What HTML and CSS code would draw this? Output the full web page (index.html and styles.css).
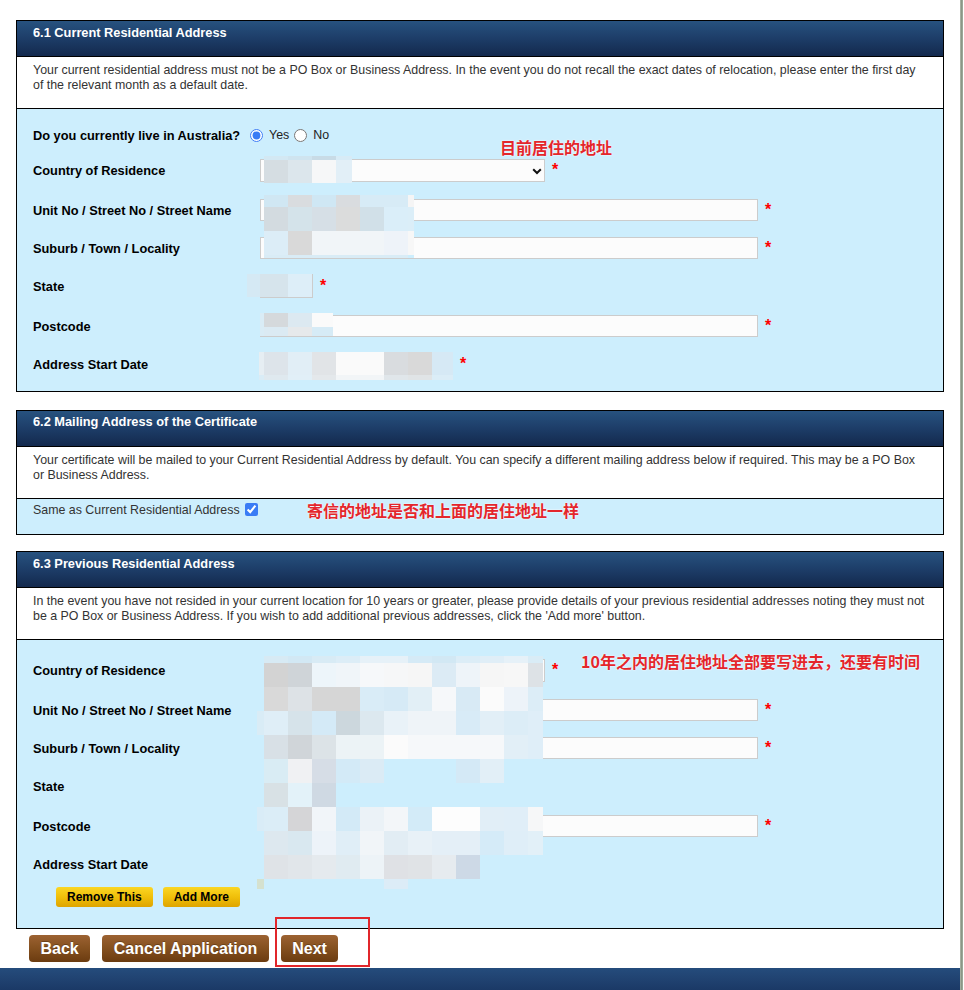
FILE: index.html
```html
<!DOCTYPE html>
<html lang="en">
<head>
<meta charset="utf-8">
<title>Residential Address</title>
<link rel="stylesheet" href="styles.css">
</head>
<body>
<div class="page">
  <div class="main">
    <div class="content">

      <section class="panel">
        <h2 class="panel-head">6.1 Current Residential Address</h2>
        <p class="panel-desc">Your current residential address must not be a PO Box or Business Address. In the event you do not recall the exact dates of relocation, please enter the first day<br>of the relevant month as a default date.</p>
        <div class="panel-body body-current">
          <div class="row row-short">
            <span class="label">Do you currently live in Australia?</span>
            <div class="field radios">
              <input type="radio" name="au" checked><span>Yes</span><input type="radio" name="au"><span>No</span>
            </div>
          </div>
          <div class="row">
            <span class="label">Country of Residence</span>
            <div class="field">
              <span class="select-wrap"><select class="select w-country"></select><svg class="chev" width="10" height="7" viewBox="0 0 10 7"><path d="M1.2 1.2 L5 5 L8.8 1.2" fill="none" stroke="#111" stroke-width="2"/></svg></span>
              <span class="req">*</span>
            </div>
          </div>
          <div class="row row-tall">
            <span class="label">Unit No / Street No / Street Name</span>
            <div class="field"><input class="text" type="text"><span class="req">*</span></div>
          </div>
          <div class="row row-tight">
            <span class="label">Suburb / Town / Locality</span>
            <div class="field"><input class="text" type="text"><span class="req">*</span></div>
          </div>
          <div class="row row-tall">
            <span class="label">State</span>
            <div class="field"><select class="select w-state"></select><span class="req">*</span></div>
          </div>
          <div class="row">
            <span class="label">Postcode</span>
            <div class="field"><input class="text" type="text"><span class="req">*</span></div>
          </div>
          <div class="row">
            <span class="label">Address Start Date</span>
            <div class="field">
              <div class="date-group"><select class="select w-day"></select><select class="select w-day"></select><select class="select w-year"></select></div>
              <span class="req">*</span>
            </div>
          </div>

          <div class="mosaic mz-country"><div class="mc1"></div><div class="mc2"></div></div>
          <div class="mosaic mz-street"><div class="ms1"></div><div class="ms2"></div><div class="ms3"></div><div class="ms4"></div></div>
          <div class="mosaic mz-state"><div class="mst"></div></div>
          <div class="mosaic mz-post"><div class="mp1"></div><div class="mp2"></div></div>
          <div class="mosaic mz-date"><div class="md1"></div><div class="md2"></div></div>

          <span class="note note-current">目前居住的地址</span>
        </div>
      </section>

      <section class="panel panel-mid">
        <h2 class="panel-head">6.2 Mailing Address of the Certificate</h2>
        <p class="panel-desc">Your certificate will be mailed to your Current Residential Address by default. You can specify a different mailing address below if required. This may be a PO Box<br>or Business Address.</p>
        <div class="panel-body body-mail">
          <span class="same">Same as Current Residential Address</span><input class="check" type="checkbox" checked>
          <span class="note note-mail">寄信的地址是否和上面的居住地址一样</span>
        </div>
      </section>

      <section class="panel panel-last">
        <h2 class="panel-head">6.3 Previous Residential Address</h2>
        <p class="panel-desc">In the event you have not resided in your current location for 10 years or greater, please provide details of your previous residential addresses noting they must not<br>be a PO Box or Business Address. If you wish to add additional previous addresses, click the 'Add more' button.</p>
        <div class="panel-body body-prev">
          <div class="row">
            <span class="label">Country of Residence</span>
            <div class="field">
              <span class="select-wrap"><select class="select w-country"></select></span>
              <span class="req">*</span>
            </div>
          </div>
          <div class="row row-tall">
            <span class="label">Unit No / Street No / Street Name</span>
            <div class="field"><input class="text" type="text"><span class="req">*</span></div>
          </div>
          <div class="row row-tight">
            <span class="label">Suburb / Town / Locality</span>
            <div class="field"><input class="text" type="text"><span class="req">*</span></div>
          </div>
          <div class="row row-tall">
            <span class="label">State</span>
            <div class="field"><select class="select w-state"></select><span class="req">*</span></div>
          </div>
          <div class="row">
            <span class="label">Postcode</span>
            <div class="field"><input class="text" type="text"><span class="req">*</span></div>
          </div>
          <div class="row">
            <span class="label">Address Start Date</span>
            <div class="field">
              <div class="date-group"><select class="select w-day"></select><select class="select w-day"></select><select class="select w-year"></select></div>
              <span class="req">*</span>
            </div>
          </div>
          <div class="row-actions">
            <button class="btn-yellow" type="button">Remove This</button>
            <button class="btn-yellow" type="button">Add More</button>
          </div>

          <div class="mosaic mz-prev">
            <div class="p0"></div><div class="p1"></div><div class="p2"></div><div class="p3"></div>
            <div class="p4"></div><div class="p5"></div><div class="p6"></div><div class="p7"></div>
            <div class="p8"></div><div class="p9"></div><div class="p10"></div>
          </div>

          <span class="note note-prev">10年之内的居住地址全部要写进去，还要有时间</span>
        </div>
      </section>

      <div class="nav">
        <button class="btn-brown" type="button">Back</button>
        <button class="btn-brown" type="button">Cancel Application</button>
        <button class="btn-brown" type="button">Next</button>
        <span class="callout"></span>
      </div>
    </div>
    <footer class="footer"></footer>
  </div>
  <div class="edge"></div>
</div>
</body>
</html>
```

FILE: styles.css
```css
html, body {
  margin: 0;
  padding: 0;
}

body {
  font-family: "Liberation Sans", Arial, Helvetica, sans-serif;
  font-size: 12px;
  color: #000;
  background: #fff;
}

.page {
  display: flex;
  min-height: 100vh;
}

.main {
  width: 960px;
  display: flex;
  flex-direction: column;
}

.edge {
  width: 3px;
  background: linear-gradient(to right, #b3bbaf, #8a9787 50%, #a5aea1);
}

.content {
  padding: 20px 0 0 16px;
}

/* ---------- panels ---------- */
.panel {
  width: 928px;
  box-sizing: border-box;
  border: 1px solid #000;
}

.panel-mid {
  margin-top: 18px;
}

.panel-last {
  margin-top: 16px;
}

.panel-head {
  margin: 0;
  height: 36px;
  box-sizing: border-box;
  padding: 5px 16px 0;
  border-bottom: 1px solid #000;
  background: linear-gradient(to bottom, #27527f 0%, #1d3d68 50%, #13294d 100%);
  color: #fff;
  font-size: 12.8px;
  line-height: 14px;
  font-weight: bold;
}

.panel-mid .panel-head {
  padding-top: 4px;
}

.panel-desc {
  margin: 0;
  height: 52px;
  box-sizing: border-box;
  padding: 6px 4px 0 16px;
  border-bottom: 1px solid #000;
  background: #fff;
  color: #333;
  font-size: 12.4px;
  line-height: 15px;
  white-space: nowrap;
}

.panel-body {
  position: relative;
  background: #cdeefd;
  padding: 0 16px;
}

.body-current {
  padding-top: 10px;
  padding-bottom: 8px;
}

.body-prev {
  padding-top: 11px;
  padding-bottom: 17px;
}

.body-mail {
  padding-top: 3px;
  padding-bottom: 16px;
  line-height: 16px;
  color: #333;
}

/* ---------- rows ---------- */
.row {
  display: flex;
  align-items: center;
  height: 38px;
}

.row-short { height: 32px; }
.row-tall  { height: 42px; }
.row-tight { height: 34px; }

.label {
  width: 212px;
  flex: none;
  font-weight: bold;
  font-size: 12.8px;
}

.field {
  display: flex;
  align-items: center;
}

.radios {
  color: #222;
  font-size: 12.4px;
}

.radios input {
  width: 13px;
  height: 13px;
  margin: 0 6px 0 5px;
  accent-color: #3a7cf5;
}

.text {
  width: 498px;
  height: 22px;
  box-sizing: border-box;
  margin: 0 0 0 15px;
  padding: 0 4px;
  border: 1px solid #ccc;
  background: #fcfcfc;
  border-radius: 0;
  font: inherit;
}

.select {
  appearance: none;
  -webkit-appearance: none;
  height: 23px;
  box-sizing: border-box;
  margin: 0;
  padding: 0;
  border: 1px solid #ccc;
  background: #fcfcfc;
  border-radius: 0;
  font: inherit;
}

.select-wrap {
  position: relative;
  display: inline-block;
  margin-left: 15px;
  height: 23px;
}

.w-country { width: 285px; display: block; }
.w-state { width: 53px; height: 24px; margin-left: 15px; }
.w-day { width: 62px; }
.w-year { width: 61px; }

.chev {
  position: absolute;
  right: 3px;
  top: 9px;
}

.date-group {
  display: flex;
  gap: 4px;
  margin-left: 15px;
}

.req {
  color: #f00;
  font-weight: bold;
  font-size: 16px;
  line-height: 16px;
  margin-left: 7px;
}

.same {
  font-size: 12.4px;
}

.check {
  width: 13px;
  height: 13px;
  margin: 0 0 0 5px;
  vertical-align: -2px;
  accent-color: #3a7cf5;
}

.row-actions {
  display: flex;
  align-items: center;
  gap: 10px;
  height: 28px;
  padding-left: 23px;
}

.btn-yellow {
  height: 20px;
  padding: 0 11px;
  border: none;
  border-radius: 3px;
  background: linear-gradient(to bottom, #fbd624 0%, #f0bf0a 50%, #dea400 100%);
  color: #000;
  font-family: "Liberation Sans", Arial, sans-serif;
  font-weight: bold;
  font-size: 12px;
  line-height: 20px;
}

/* ---------- annotations ---------- */
.note {
  position: absolute;
  font-family: "Noto Sans CJK SC", "Liberation Sans", sans-serif;
  font-size: 16px;
  line-height: 18px;
  font-weight: bold;
  color: #e3262c;
  white-space: nowrap;
  text-shadow: 0 0 2px #fff, 0 0 1px #fff;
}

.note-current { left: 483px; top: 29px; }
.note-mail { left: 290px; top: 2px; }
.note-prev { left: 564px; top: 12px; }

/* ---------- mosaics (pixelated personal data) ---------- */
.mosaic {
  position: absolute;
  display: flex;
  flex-direction: column;
}

.mosaic > div { flex: none; }

.mz-country { left: 247px; top: 47px; width: 88px; }
.mc1 { height: 4px; background: linear-gradient(to right, #d3e8f3 0 24px, #cfe4ef 24px 48px, #c8dbe6 48px 72px, #d7ebf6 72px 88px); }
.mc2 { height: 23px; background: linear-gradient(to right, #d5dde2 0 24px, #dce6ec 24px 48px, #f6f7f8 48px 72px, #e2eff7 72px 88px); }

.mz-street { left: 247px; top: 86px; width: 150px; }
.ms1 { height: 12px; background: linear-gradient(to right, #d0e7f3 0 24px, #d9dcdf 24px 48px, #cfe7f4 48px 72px, #d9dcdf 72px 96px, #d7ebf6 96px 120px, #d7ebf6 120px 144px, #f5f5f5 144px 150px); }
.ms2 { height: 24px; background: linear-gradient(to right, #d3dbe0 0 24px, #d4e3ea 24px 48px, #d6dfe6 48px 72px, #dbdcdc 72px 96px, #d1e0e8 96px 120px, #daeef9 120px 144px, #dbeef8 144px 150px); }
.ms3 { height: 24px; background: linear-gradient(to right, #dcedf7 0 24px, #d9d9d9 24px 48px, #f1f5f8 48px 72px, #f1f5f8 72px 96px, #f1f5f8 96px 120px, #eef3f9 120px 144px, #f7f7f7 144px 150px); }
.ms4 { height: 3px; background: linear-gradient(to right, #d9ecf6 0 144px, #cdeefd 144px 150px); }

.mz-state { left: 230px; top: 165px; width: 65px; }
.mst { height: 23px; background: linear-gradient(to right, #d5e9f4 0 13px, #d6e4ec 13px 41px, #ddeef8 41px 65px); }

.mz-post { left: 243px; top: 204px; width: 73px; }
.mp1 { height: 14px; background: linear-gradient(to right, #d9ecf6 0 4px, #d5d9dc 4px 28px, #dce9f1 28px 52px, #fafafa 52px 73px); }
.mp2 { height: 9px; background: linear-gradient(to right, #d9ecf6 0 4px, #dbeaf3 4px 28px, #e6e9eb 28px 52px, #d6ebf6 52px 73px); }

.mz-date { left: 242px; top: 243px; width: 194px; }
.md1 { height: 23px; background: linear-gradient(to right, #e6eef3 0 5px, #dde4ea 5px 29px, #e1eef6 29px 53px, #e1e4e7 53px 77px, #fafafa 77px 125px, #d9dcdf 125px 149px, #d9d9d9 149px 173px, #d6e9f5 173px 194px); }
.md2 { height: 5px; background: linear-gradient(to right, #d9ecf6 0 5px, #dfe9ef 5px 29px, #e1eff7 29px 53px, #e4e8eb 53px 77px, #f2f5f7 77px 125px, #e0e6ea 125px 149px, #e0e4e6 149px 173px, #dbedf7 173px 194px); }

.mz-prev { left: 240px; top: 16px; width: 286px; }
.p0 { height: 7px; background: linear-gradient(to right, #cdeefd 0 7px, #d7eaf4 7px 31px, #d2e8f4 31px 55px, #d8ebf5 55px 79px, #dcedf7 79px 103px, #e6f1f8 103px 127px, #e6f1f8 127px 151px, #d5eaf6 151px 175px, #d2e8f4 175px 199px, #dcedf7 199px 223px, #e0eef7 223px 247px, #e6f1f8 247px 271px, #d9ecf6 271px 286px); }
.p1 { height: 24px; background: linear-gradient(to right, #cdeefd 0 7px, #d3d3d3 7px 31px, #cfd4d8 31px 55px, #edf5fa 55px 79px, #f0f5f9 79px 103px, #f6f8fa 103px 127px, #f6f7f8 127px 151px, #f6f6f6 151px 175px, #dcebf5 175px 199px, #eef4f9 199px 223px, #f6f6f6 223px 247px, #f7f7f7 247px 271px, #dde2e6 271px 286px); }
.p2 { height: 24px; background: linear-gradient(to right, #cdeefd 0 7px, #d9d9d9 7px 31px, #dde2e6 31px 55px, #d6d6d6 55px 79px, #d6d6d6 79px 103px, #d9ecf7 103px 127px, #d6eaf6 127px 151px, #e2eff6 151px 175px, #f6f8fa 175px 199px, #d8eaf5 199px 223px, #fbfbfb 223px 247px, #edf3f9 247px 271px, #dcedf7 271px 286px); }
.p3 { height: 24px; background: linear-gradient(to right, #d9ecf6 0 7px, #dfeef7 7px 31px, #d6e3ea 31px 55px, #d4eaf7 55px 79px, #ccd7dd 79px 103px, #dce8ef 103px 127px, #e9f2f8 127px 151px, #eff4f8 151px 175px, #eff4f8 175px 199px, #d8ebf7 199px 223px, #e2eff7 223px 247px, #dcedf7 247px 271px, #dfeef8 271px 286px); }
.p4 { height: 24px; background: linear-gradient(to right, #cdeefd 0 7px, #d8e0e6 7px 31px, #d0d5d9 31px 55px, #dce3e7 55px 79px, #ecf3f6 79px 103px, #ecf3f6 103px 127px, #fbfbfb 127px 151px, #f6f8fa 151px 175px, #f6f8fa 175px 199px, #f6f8fa 199px 223px, #f6f8fa 223px 247px, #e2eff7 247px 271px, #dfeef8 271px 286px); }
.p5 { height: 24px; background: linear-gradient(to right, #cdeefd 0 7px, #d9ecf4 7px 31px, #f0f1f3 31px 55px, #d6dde6 55px 79px, #d3eaf7 79px 103px, #dbebf5 103px 127px, #cdeefd 127px 199px, #d4e9f6 199px 223px, #e2eff7 223px 247px, #cdeefd 247px 286px); }
.p6 { height: 24px; background: linear-gradient(to right, #cdeefd 0 7px, #d8e1e5 7px 31px, #e3f2f9 31px 55px, #cfd9e3 55px 79px, #cdeefd 79px 286px); }
.p7 { height: 24px; background: linear-gradient(to right, #d9ecf7 0 7px, #dbedf7 7px 31px, #d5d5d7 31px 55px, #f1f5f9 55px 79px, #d3eaf7 79px 103px, #ebf2f7 103px 127px, #f3f6f9 127px 151px, #d3ebf8 151px 175px, #fdfdfd 175px 223px, #e1eef7 223px 247px, #e0eef8 247px 271px, #f6f7f8 271px 286px); }
.p8 { height: 24px; background: linear-gradient(to right, #cdeefd 0 7px, #dde8ef 7px 31px, #d9e8f0 31px 55px, #edf3f9 55px 79px, #e0eef7 79px 103px, #f1f5f8 103px 127px, #e2edf4 127px 151px, #e8f1f7 151px 175px, #e4eff7 175px 223px, #d5ebf8 223px 247px, #dfeef8 247px 271px, #e2f0f8 271px 286px); }
.p9 { height: 24px; background: linear-gradient(to right, #cdeefd 0 7px, #dfe3e7 7px 31px, #e1e6ea 31px 55px, #e5eaee 55px 79px, #e0ebf1 79px 103px, #edf3f7 103px 127px, #dfe1e5 127px 151px, #e0e3e6 151px 175px, #e6ebef 175px 199px, #cdd9e6 199px 223px, #cdeefd 223px 286px); }
.p10 { height: 10px; background: linear-gradient(to right, #d5e1cf 0 7px, #cdeefd 7px 127px, #dcecf7 127px 151px, #cdeefd 151px 286px); }

/* ---------- navigation ---------- */
.nav {
  position: relative;
  display: flex;
  gap: 12px;
  margin: 6px 0 6px;
  padding-left: 13px;
  height: 27px;
}

.btn-brown {
  height: 27px;
  padding: 0 11.5px;
  border: none;
  border-radius: 4px;
  background: linear-gradient(to bottom, #9c6232 0%, #84501f 50%, #6b3b10 100%);
  color: #fff;
  font-family: "Liberation Sans", Arial, sans-serif;
  font-weight: bold;
  font-size: 16px;
  line-height: 27px;
  text-shadow: 0 -1px 0 rgba(0, 0, 0, 0.25);
}

.callout {
  position: absolute;
  left: 259px;
  top: -18px;
  width: 95px;
  height: 50px;
  box-sizing: border-box;
  border: 2px solid #e1262b;
}

.footer {
  flex: 1;
  min-height: 22px;
  background: linear-gradient(to bottom, #254c7c, #1b3966);
}
```
